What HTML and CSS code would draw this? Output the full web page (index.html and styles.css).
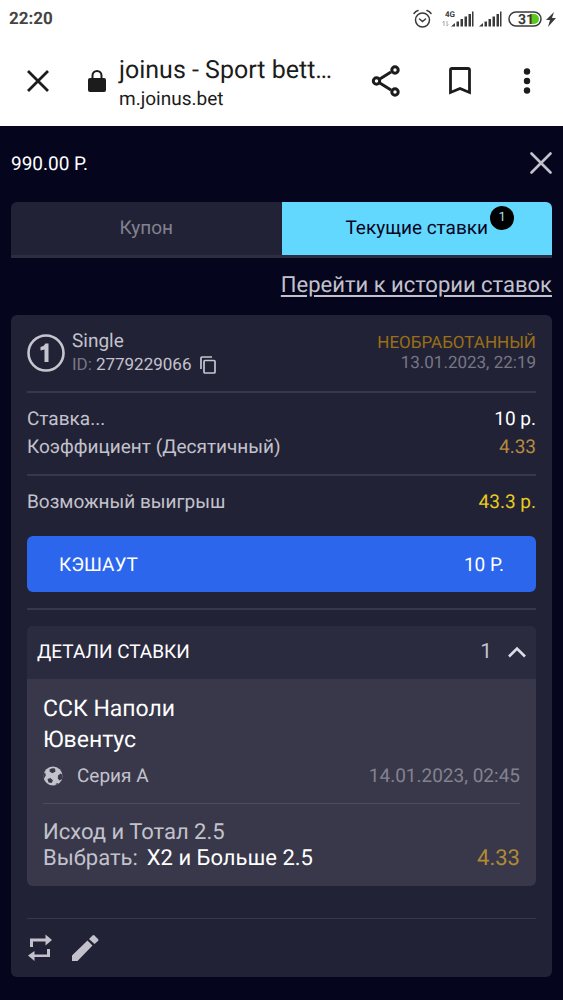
FILE: index.html
```html
<!DOCTYPE html>
<html lang="ru">
<head>
<meta charset="utf-8">
<meta name="viewport" content="width=device-width, initial-scale=1">
<title>joinus - Sport betting</title>
<link rel="stylesheet" href="styles.css">
</head>
<body>
<div class="status-bar">
  <span class="clock">22:20</span>
  <svg class="status-icons" width="146" height="24" viewBox="0 0 146 24" role="img" aria-label="4G, 31%">
    <g fill="none" stroke="#3a3a3a" stroke-width="1.5" stroke-linecap="round">
      <circle cx="9.500" cy="13" r="7"/>
      <path d="M6.500 12l3 2.500 3-2.500M1 6.500Q2.500 4.300 5 3.500M18 6.500Q16.500 4.300 14 3.500"/>
    </g>
    <text class="net" x="32" y="10">4G</text>
    <path d="M31 14v5M29.500 15.500L31 14M34 14v5M34 19l1.500-1.500" fill="none" stroke="#aaa" stroke-width="1"/>
    <path d="M38 19.500l4-3.500v3.500zM43.500 14.500h2.500v5h-2.500zM47.500 12h2.500v7.500h-2.500zM51.500 9.500h2.500v10h-2.500zM55.500 7h2.500v12.500h-2.500zM59 4.500h1.500v15H59z" fill="#3a3a3a"/>
    <path d="M66 19.500l4-3.500v3.500zM71.500 14.500H74v5h-2.500zM75.500 12H78v7.500h-2.500zM79.500 9.500H82v10h-2.500zM83.500 7H86v12.500h-2.500zM87 4.500h1.500v15H87z" fill="#3a3a3a"/>
    <rect x="96" y="5" width="32" height="14" rx="7" fill="#fff" stroke="#3a3a3a" stroke-width="1.500"/>
    <path d="M117 7h4a5 5 0 0 1 0 10h-4z" fill="#5ac81e"/>
    <text class="charge" x="105" y="17">31</text>
    <path d="M141 5l-8 8h4l-2 7 8-9h-4z" fill="#3a3a3a"/>
  </svg>
</div>

<header class="browser-bar">
  <button class="icon-btn" type="button" aria-label="Закрыть вкладку">
    <svg width="24" height="24" viewBox="0 0 24 24"><path d="M2 2l20 20M22 2L2 22" fill="none" stroke="#1c1c1c" stroke-width="2.800"/></svg>
  </button>
  <svg class="lock" width="18" height="24" viewBox="0 0 18 24"><path d="M4.500 10V6.500a4.500 4.500 0 0 1 9 0V10" fill="none" stroke="#1c1c1c" stroke-width="2"/><rect y="9" width="18" height="14" rx="2" fill="#1c1c1c"/></svg>
  <div class="address">
    <div class="page-title">joinus - Sport bett…</div>
    <div class="page-url">m.joinus.bet</div>
  </div>
  <div class="browser-actions">
    <button class="icon-btn" type="button" aria-label="Поделиться">
      <svg width="30" height="32" viewBox="0 0 30 32" fill="none" stroke="#1c1c1c" stroke-width="3"><path d="M8 14.500L20 7M8 17.500L20 25"/><circle cx="5.500" cy="16" r="3.200"/><circle cx="24" cy="5" r="3.200"/><circle cx="24" cy="27" r="3.200"/></svg>
    </button>
    <button class="icon-btn" type="button" aria-label="Закладка">
      <svg width="22" height="28" viewBox="0 0 22 28"><path d="M1.500 25.500V3Q1.500 1.500 3 1.500h16Q20.500 1.500 20.500 3v22.500L11 21.500z" fill="none" stroke="#1c1c1c" stroke-width="2.800"/></svg>
    </button>
    <button class="icon-btn menu" type="button" aria-label="Меню">
      <svg width="8" height="26" viewBox="0 0 8 26" fill="#1c1c1c"><circle cx="4" cy="3.500" r="3.200"/><circle cx="4" cy="13" r="3.200"/><circle cx="4" cy="22.500" r="3.200"/></svg>
    </button>
  </div>
</header>

<main class="coupon">
  <div class="coupon-top">
    <span class="balance">990.00 Р.</span>
    <button class="icon-btn" type="button" aria-label="Закрыть">
      <svg width="22" height="22" viewBox="0 0 22 22"><path d="M1.500 1.500l19 19M20.500 1.500l-19 19" fill="none" stroke="#c3c2cc" stroke-width="2.600" stroke-linecap="round"/></svg>
    </button>
  </div>

  <nav class="tabs">
    <button class="tab" type="button">Купон</button>
    <button class="tab tab-active" type="button"><span class="tab-label">Текущие ставки<span class="badge">1</span></span></button>
  </nav>

  <a class="history-link" href="#history">Перейти к истории ставок</a>

  <article class="card">
    <div class="card-head">
      <svg class="type-icon" width="38" height="38" viewBox="0 0 38 38"><circle cx="19" cy="19" r="17.500" fill="none" stroke="#c6c5cf" stroke-width="2.600"/><path d="M13.500 13Q17 12.500 18.500 9.500H21.500V28H17.500V15.500L13.500 16.500z" fill="#c6c5cf"/></svg>
      <div class="card-id">
        <div>Single</div>
        <div class="id-line"><span class="muted">ID:</span><span class="id-value">2779229066</span>
          <button class="icon-btn copy" type="button" aria-label="Копировать">
            <svg width="16" height="18" viewBox="0 0 16 18" fill="none" stroke="#c6c5cf" stroke-width="1.700"><path d="M1 13V2Q1 1 2 1h10"/><rect x="4" y="4.500" width="11" height="12.500" rx="1"/></svg>
          </button>
        </div>
      </div>
      <div class="card-state">
        <div class="state">НЕОБРАБОТАННЫЙ</div>
        <div class="muted">13.01.2023, 22:19</div>
      </div>
    </div>

    <dl class="rows">
      <div class="row"><dt>Ставка...</dt><dd class="white">10 р.</dd></div>
      <div class="row"><dt>Коэффициент (Десятичный)</dt><dd class="odds">4.33</dd></div>
    </dl>
    <dl class="rows">
      <div class="row"><dt>Возможный выигрыш</dt><dd class="win">43.3 р.</dd></div>
    </dl>

    <button class="cashout" type="button"><span>КЭШАУТ</span><span>10 Р.</span></button>

    <div class="details-wrap">
      <section class="details">
        <button class="details-head" type="button" aria-expanded="true">
          <span>ДЕТАЛИ СТАВКИ</span>
          <span class="count">1</span>
          <svg width="18" height="12" viewBox="0 0 18 12"><path d="M1 10.500l8-8 8 8" fill="none" stroke="#dddce6" stroke-width="2.600"/></svg>
        </button>
        <div class="details-body">
          <div class="teams">
            <div>ССК Наполи</div>
            <div>Ювентус</div>
          </div>
          <div class="league">
            <svg width="20" height="20" viewBox="0 0 20 20"><circle cx="10" cy="10" r="9.500" fill="#c3c2ca"/><path d="M6.500 3.500Q9 1.500 12 2.500L12.500 5.500 9.500 7.200 6.700 5.800zM4.500 13L7.500 12 10 14.500 8.500 17 5.500 16.500zM15 9.500L17.500 7.500 19.500 9 19 13 16.500 14.500 14.800 12.500zM.5 8L2.200 6.500 2.800 9.500 1 12.500.3 11zM12.500 18l2-1 .5 1-2 1z" fill="#38384a"/></svg>
            <span>Серия А</span>
            <time class="start">14.01.2023, 02:45</time>
          </div>
          <div class="pick">
            <div class="market">Исход и Тотал 2.5</div>
            <div class="pick-line"><span>Выбрать:</span><span class="white">Х2 и Больше 2.5</span><span class="pick-odds">4.33</span></div>
          </div>
        </div>
      </section>
    </div>

    <footer class="card-foot">
      <button class="icon-btn" type="button" aria-label="Повторить ставку">
        <svg width="24" height="28" viewBox="0 0 24 28" fill="#c3c2ca"><path d="M2 13V4.500h15.500V.5L24 6l-6.500 5.500v-4H5V13zM22 15v8H6.500v4L0 21.500 6.500 17v3.500H19V15z"/></svg>
      </button>
      <button class="icon-btn" type="button" aria-label="Изменить">
        <svg width="28" height="28" viewBox="0 0 28 28" fill="#c3c2ca"><path d="M1 21.500L16.500 6.500l5 5L6.500 27H1zM18 5l3.500-3.500Q22.500.5 23.500 1.500l3.500 3.500q1 1 0 2L23.500 10z"/></svg>
      </button>
    </footer>
  </article>
</main>
</body>
</html>
```
FILE: styles.css
```css
* {
  box-sizing: border-box;
}

body {
  margin: 0;
  min-height: 100vh;
  background: #05051e;
  color: #c3c2cc;
  font-family: Roboto, "Liberation Sans", sans-serif;
  font-size: 19px;
  text-rendering: geometricPrecision;
}

button {
  margin: 0;
  padding: 0;
  border: 0;
  background: none;
  color: inherit;
  font: inherit;
  text-rendering: inherit;
  cursor: pointer;
}

svg {
  display: block;
  flex: none;
}

.icon-btn {
  display: flex;
}

/* Phone status bar */
.status-bar {
  display: flex;
  align-items: center;
  justify-content: space-between;
  height: 38px;
  padding: 0 4px 0 9px;
  background: #fff;
}

.clock {
  color: #444;
  font-size: 17px;
  font-weight: 700;
}

.net {
  font-size: 8px;
  font-weight: 700;
  fill: #3a3a3a;
}

.charge {
  font-size: 14px;
  font-weight: 700;
  fill: #3a3a3a;
}

/* Browser bar */
.browser-bar {
  display: flex;
  align-items: center;
  height: 88px;
  padding: 0 32px 2px 26px;
  background: #fff;
  color: #1c1c1c;
}

.lock {
  margin: 0 13px 0 38px;
}

.address {
  flex: 1;
  min-width: 0;
  padding-top: 4px;
  white-space: nowrap;
}

.page-title {
  font-size: 25px;
  line-height: 32px;
}

.page-url {
  font-size: 19px;
  line-height: 24px;
}

.browser-actions {
  display: flex;
  align-items: center;
  gap: 48px;
}

.menu {
  margin-left: 4px;
}

/* Coupon panel */
.coupon {
  padding: 0 11px 23px;
}

.coupon-top {
  display: flex;
  align-items: center;
  justify-content: space-between;
  height: 76px;
  padding-bottom: 2px;
}

.balance {
  color: #fff;
}

.tabs {
  display: flex;
  height: 56px;
  border-bottom: 3px solid #2d2d40;
}

.tab {
  flex: 1;
  padding-bottom: 2px;
  background: #222236;
  color: #83828f;
  border-radius: 6px 0 0 0;
}

.tab-active {
  background: #62d8ff;
  color: #05051e;
  border-radius: 0 6px 0 0;
}

.tab-label {
  position: relative;
}

.badge {
  position: absolute;
  left: 100%;
  bottom: 9px;
  width: 24px;
  margin-left: 2px;
  border-radius: 12px;
  background: #000;
  color: #a9dff0;
  font-size: 13px;
  line-height: 24px;
  text-align: center;
}

.history-link {
  display: block;
  padding: 12px 0 13px;
  color: #c3c2cc;
  font-size: 22px;
  line-height: 32px;
  text-align: right;
  text-underline-offset: 3px;
}

/* Bet card */
.card {
  padding: 14px 16px 0;
  border-radius: 6px;
  background: #222236;
}

.card-head {
  display: flex;
  align-items: center;
  padding-bottom: 14px;
  line-height: 24px;
}

.card-id {
  flex: 1;
  margin-left: 7px;
}

.id-line {
  display: flex;
  align-items: center;
  font-size: 17px;
}

.id-value {
  margin-left: 4px;
}

.copy {
  margin-left: 9px;
}

.muted {
  color: #777685;
}

.card-state {
  font-size: 17px;
  line-height: 20px;
  text-align: right;
}

.state {
  color: #9a6f16;
}

.rows {
  margin: 0;
  padding: 12px 0 13px;
  border-top: 2px solid #38374b;
}

.row {
  display: flex;
  justify-content: space-between;
  line-height: 28px;
}

.row dd {
  margin: 0;
}

.row .white,
.white {
  color: #fff;
}

.row .odds {
  color: #b58a3f;
}

.row .win {
  color: #e8cc1c;
}

.cashout {
  display: flex;
  align-items: center;
  justify-content: space-between;
  width: 100%;
  height: 56px;
  margin: 7px 0 16px;
  padding: 0 32px;
  border-radius: 6px;
  background: #2b66ec;
  color: #fff;
}

.details-wrap {
  padding: 16px 0 32px;
  border-top: 2px solid #38374b;
}

.details {
  overflow: hidden;
  border-radius: 6px;
  background: #38384a;
}

.details-head {
  display: flex;
  align-items: center;
  width: 100%;
  height: 53px;
  padding: 0 10px 2px;
  background: #2b2b3f;
  color: #fff;
}

.count {
  margin: 0 16px 0 auto;
  color: #c3c2cc;
  font-size: 21px;
}

.details-body {
  padding: 14px 16px;
}

.teams {
  color: #fff;
  font-size: 23px;
  line-height: 31px;
}

.league {
  display: flex;
  align-items: center;
  padding: 8px 0 14px;
  border-bottom: 1px solid #4d4c5e;
  line-height: 26px;
}

.league span {
  margin-left: 14px;
}

.start {
  margin-left: auto;
  color: #83828f;
}

.pick {
  padding-top: 16px;
  font-size: 22px;
  line-height: 26px;
}

.pick-line {
  display: flex;
}

.pick-line .white {
  margin-left: 9px;
}

.pick-odds {
  margin-left: auto;
  color: #b08a35;
}

.card-foot {
  display: flex;
  gap: 19px;
  padding: 15px 0 15px 1px;
  border-top: 1px solid #38374b;
}
```
